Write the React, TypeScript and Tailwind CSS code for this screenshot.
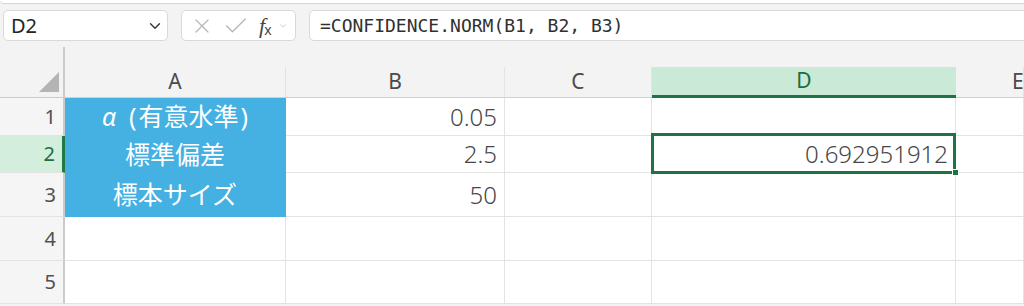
import { ChevronDown, X, Check } from "lucide-react";

const font = "font-['Noto_Sans','Noto_Sans_CJK_JP',sans-serif]";

function RowHead({ n, active = false }: { n: number; active?: boolean }) {
    return (
        <div
            className={`flex items-center justify-end pr-[7px] border-b border-[#e3e3e3] text-[20px] ${active
                ? "bg-[#d3eedc] text-[#1b6e3f] border-r-[3px] border-r-[#1f7a45]"
                : "bg-[#f5f5f5] text-[#505050] border-r-2 border-r-[#cbcbcb]"
                }`}
        >
            {n}
        </div>
    );
}

function ColHead({ label, active = false, last = false }: { label: string; active?: boolean; last?: boolean }) {
    return (
        <div className="flex flex-col justify-end">
            <div
                className={`h-[31px] flex items-center text-[21px] ${last ? "pl-[56px]" : "justify-center"} ${active
                    ? "bg-[#cae9d6] text-[#17703d] border-b-[3px] border-[#1d7444]"
                    : "text-[#4a4a4a] border-b border-[#d0d0d0] border-r border-r-[#e3e3e3]"
                    }`}
            >
                {label}
            </div>
        </div>
    );
}

function Cell({ children, blue = false, right = false }: { children?: React.ReactNode; blue?: boolean; right?: boolean }) {
    return (
        <div
            className={`flex items-center overflow-hidden whitespace-nowrap ${blue
                ? "bg-[#45b0e2] text-white text-[25px] justify-center border-r border-[#45b0e2]"
                : "bg-white text-[#474747] text-[24px] font-light border-r border-b border-[#e3e3e3]"
                } ${right ? "justify-end pr-[7px]" : ""}`}
        >
            {children}
        </div>
    );
}

export default function App() {
    return (
        <div className={`w-[1024px] h-[306px] overflow-hidden bg-[#f3f3f3] ${font}`}>
            <div className="h-[4px] bg-white border-b border-[#d6d6d6] rounded-bl-[4px]" />

            {/* name box / fx / formula */}
            <div className="mt-[6px] h-[31px] flex">
                <div className="ml-[3px] w-[165px] rounded-[5px] border border-[#d9d9d9] bg-white flex items-center justify-between pl-[7px] pr-[3px]">
                    <span className="text-[20px] text-[#242424]">D2</span>
                    <ChevronDown size={18} strokeWidth={1.8} className="text-[#333]" />
                </div>
                <div className="ml-[13px] w-[115px] rounded-[5px] border border-[#d9d9d9] bg-white flex items-center pl-[8px]">
                    <X size={24} strokeWidth={1.2} className="text-[#b8b8b8]" />
                    <Check size={28} strokeWidth={1.2} className="ml-[8px] text-[#b8b8b8]" />
                    <span className="ml-[9px] flex items-end text-[#444] leading-none">
                        <span className="italic text-[22px] font-['Liberation_Serif',serif]">f</span>
                        <span className="text-[14px] -ml-[1px]">x</span>
                    </span>
                    <ChevronDown size={10} strokeWidth={1.5} className="ml-[6px] text-[#aaa]" />
                </div>
                <div className="ml-[13px] flex-1 -mr-[10px] rounded-l-[5px] border border-[#d9d9d9] bg-white flex items-center pl-[10px]">
                    <span className="text-[18px] text-[#303030] font-['DejaVu_Sans_Mono',monospace]">=CONFIDENCE.NORM(B1, B2, B3)</span>
                </div>
            </div>

            {/* sheet */}
            <div className="mt-[6px] grid grid-cols-[65px_221px_219px_147px_304px_68px] grid-rows-[51px_38px_37px_44px_44px_43px]">
                <div className="relative border-r-2 border-b border-[#cbcbcb]">
                    <div className="absolute right-[4px] bottom-[5px] w-0 h-0 border-l-[20px] border-l-transparent border-b-[20px] border-b-[#b4b4b4]" />
                </div>
                <ColHead label="A" />
                <ColHead label="B" />
                <ColHead label="C" />
                <ColHead label="D" active />
                <ColHead label="E" last />

                <RowHead n={1} />
                <Cell blue>
                    <span className="italic">α</span>
                    <span className="ml-[13px]">(</span>
                    <span className="ml-[2px]">有意水準</span>
                    <span className="ml-[2px]">)</span>
                </Cell>
                <Cell right>0.05</Cell>
                <Cell />
                <Cell />
                <Cell />

                <RowHead n={2} active />
                <Cell blue>標準偏差</Cell>
                <Cell right>2.5</Cell>
                <Cell />
                <div className="relative flex items-center justify-end pr-[7px] bg-white text-[#474747] text-[24px] font-light border-r border-b border-[#e3e3e3]">
                    0.692951912
                    <div className="absolute -top-[3px] -left-[1px] -right-[1px] -bottom-[2px] border-[3px] border-[#1d7444]" />
                    <div className="absolute -right-[4px] -bottom-[4px] w-[7px] h-[7px] bg-[#1d7444] border border-white" />
                </div>
                <Cell />

                <RowHead n={3} />
                <Cell blue>標本サイズ</Cell>
                <Cell right>50</Cell>
                <Cell />
                <Cell />
                <Cell />

                <RowHead n={4} />
                <Cell />
                <Cell />
                <Cell />
                <Cell />
                <Cell />

                <RowHead n={5} />
                <Cell />
                <Cell />
                <Cell />
                <Cell />
                <Cell />
            </div>
        </div>
    );
}
